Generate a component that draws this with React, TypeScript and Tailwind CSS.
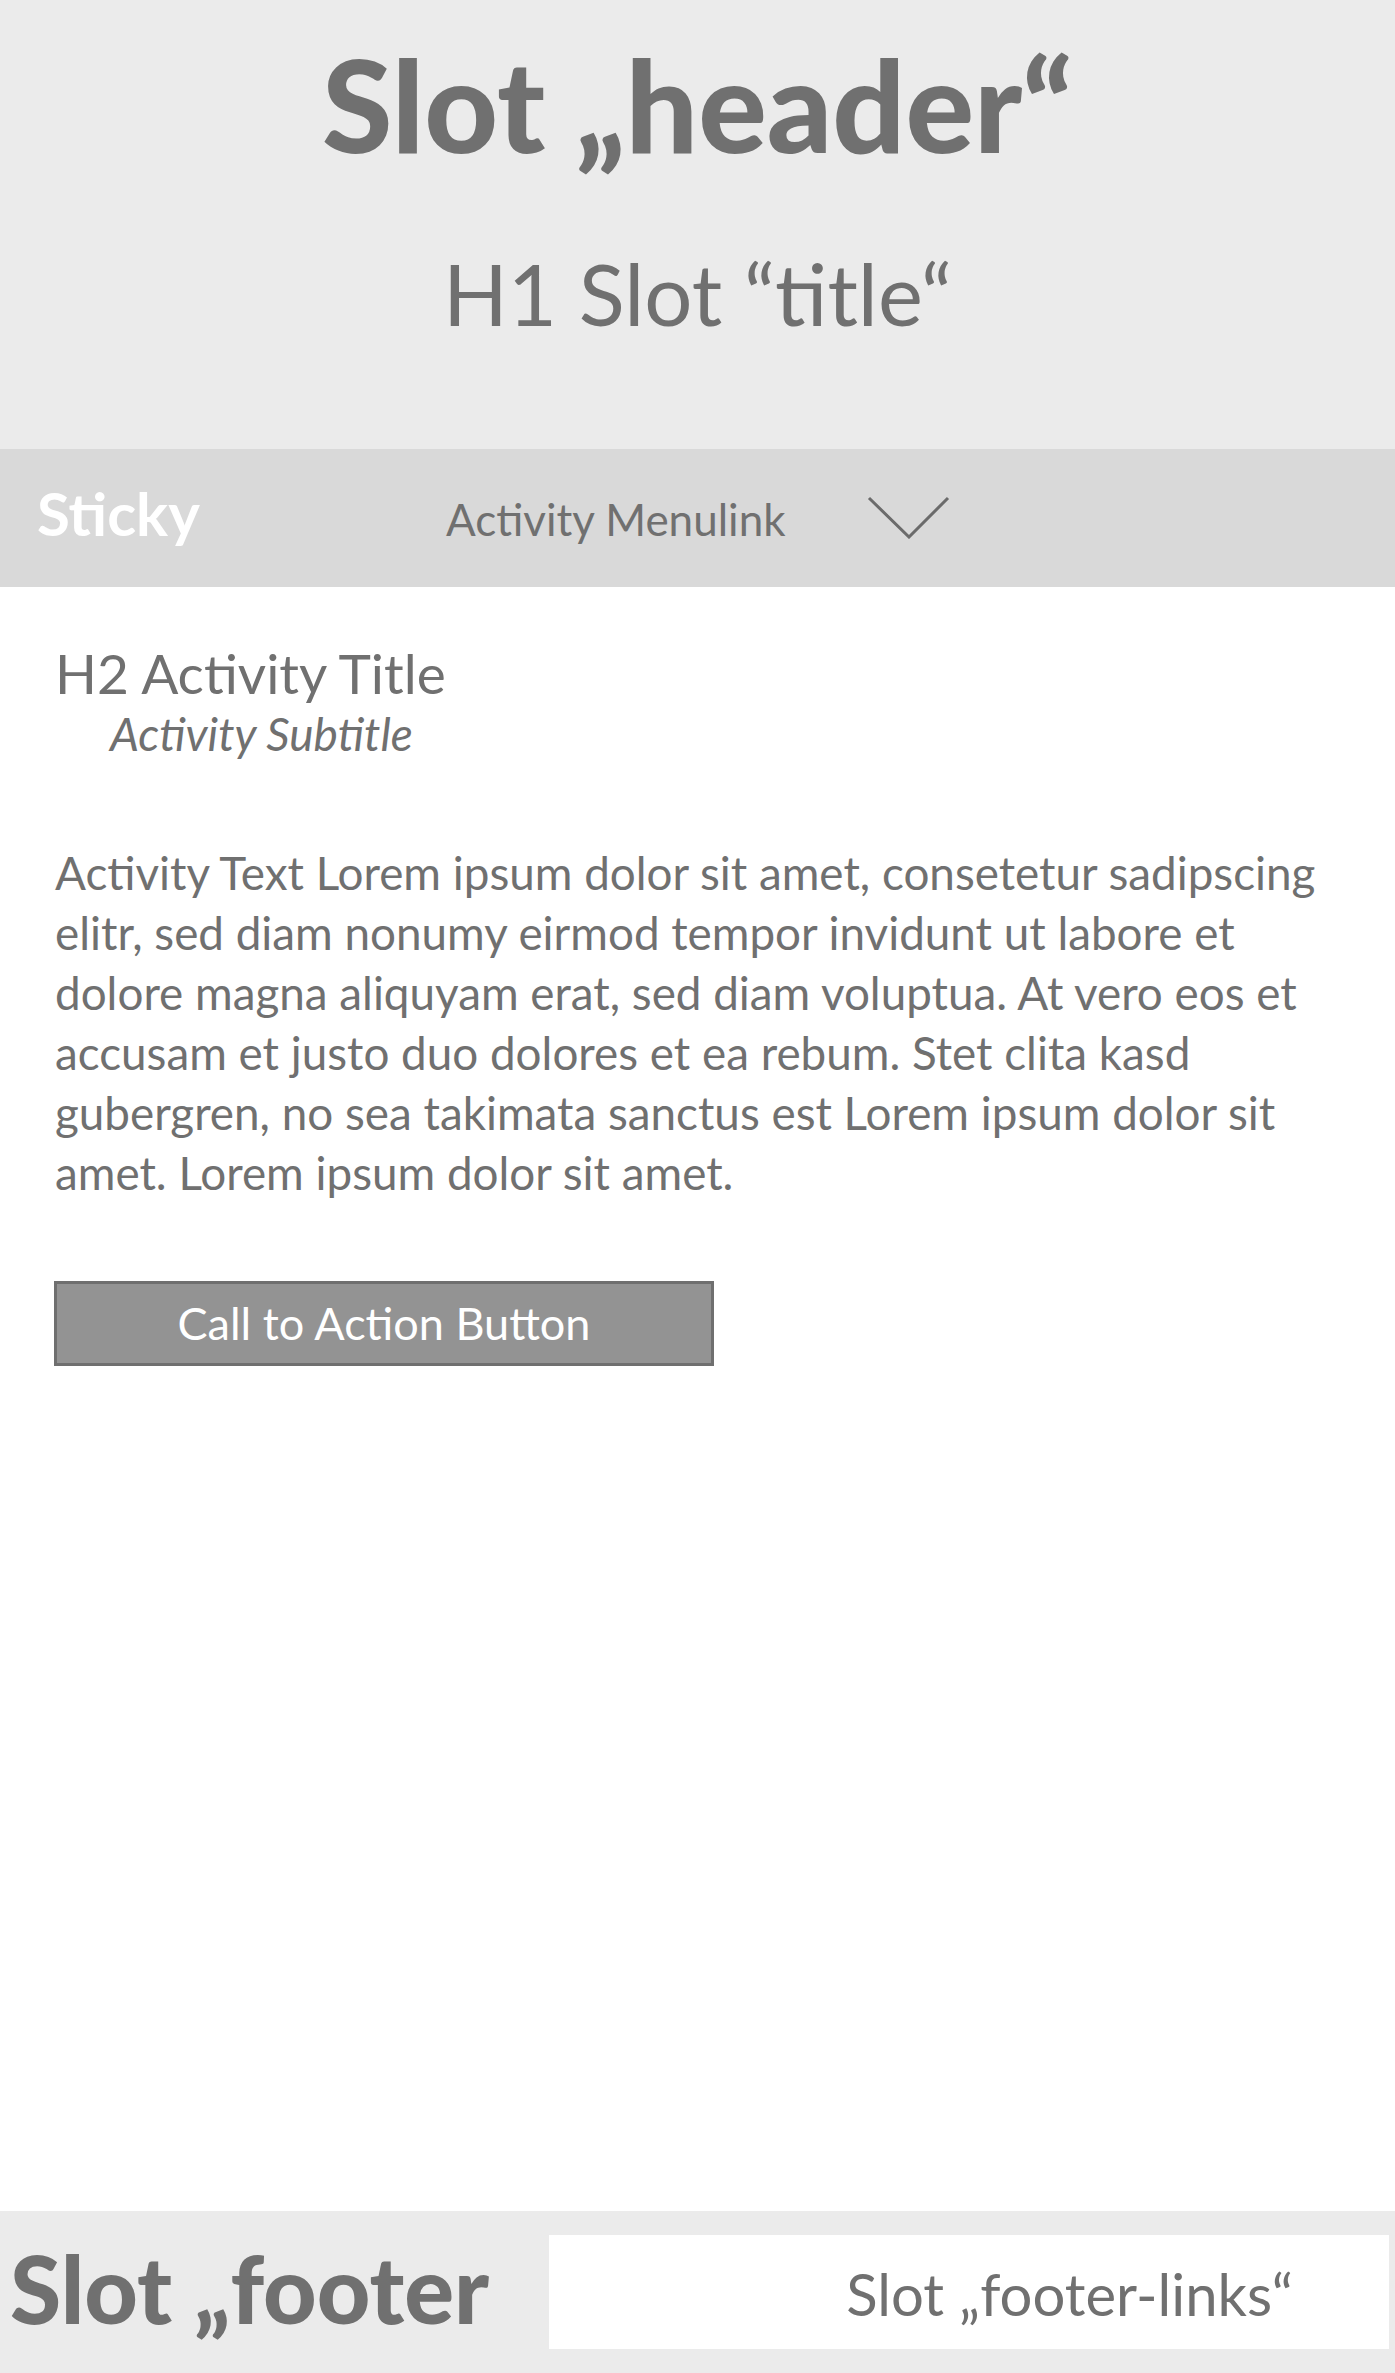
import React from 'react';

const ChevronDown: React.FC<{ className?: string }> = ({ className }) => (
  <svg className={className} width="84" height="44" viewBox="0 0 84 44" fill="none">
    <polyline points="3,3 43,42 82,3" stroke="#6b6b6b" strokeWidth="3" />
  </svg>
);

export default function App() {
  return (
    <div className="flex min-h-[2373px] w-full flex-col bg-white font-[Lato,sans-serif] text-[#707070]">
      {/* slot header */}
      <header className="flex h-[449px] flex-col items-center bg-[#ebebeb] pt-[40px]">
        <div className="text-[128px] font-black leading-none">Slot „header“</div>
        <h1 className="mt-[83px] text-[85px] font-normal leading-none">H1 Slot “title“</h1>
      </header>

      {/* sticky menu */}
      <nav className="flex h-[138px] items-baseline bg-[#d9d9d9] pt-[34px]">
        <div className="w-[446px] shrink-0 pl-[37px] text-[60px] font-bold leading-none text-white">Sticky</div>
        <div className="w-[420px] shrink-0 text-[44px] leading-none">Activity Menulink</div>
        <ChevronDown className="mt-[12px] self-start" />
      </nav>

      <main className="flex-1 px-[55px] pt-[59px]">
        <h2 className="text-[55px] font-normal leading-none">H2 Activity Title</h2>
        <p className="ml-[55px] mt-[10px] text-[46px] italic leading-none">Activity Subtitle</p>

        <p className="mt-[86px] text-[45.8px] leading-[60px]">
          Activity Text Lorem ipsum dolor sit amet, consetetur sadipscing
          <br />
          elitr, sed diam nonumy eirmod tempor invidunt ut labore et
          <br />
          dolore magna aliquyam erat, sed diam voluptua. At vero eos et
          <br />
          accusam et justo duo dolores et ea rebum. Stet clita kasd
          <br />
          gubergren, no sea takimata sanctus est Lorem ipsum dolor sit
          <br />
          amet. Lorem ipsum dolor sit amet.
        </p>

        <button className="ml-[-1px] mt-[78px] flex h-[85px] w-[660px] items-center justify-center border-[3px] border-[#6f6f6f] bg-[#939393] text-[45px] leading-none text-white">
          Call to Action Button
        </button>
      </main>

      {/* slot footer */}
      <footer className="flex h-[162px] items-start bg-[#ebebeb]">
        <div className="mt-[31px] w-[549px] shrink-0 pl-[10px] text-[93px] font-black leading-none">Slot „footer</div>
        <div className="mr-[6px] mt-[24px] flex h-[114px] flex-1 justify-end bg-white pr-[96px] pt-[30px]">
          <span className="text-[58px] leading-none">Slot „footer-links“</span>
        </div>
      </footer>
    </div>
  );
}
